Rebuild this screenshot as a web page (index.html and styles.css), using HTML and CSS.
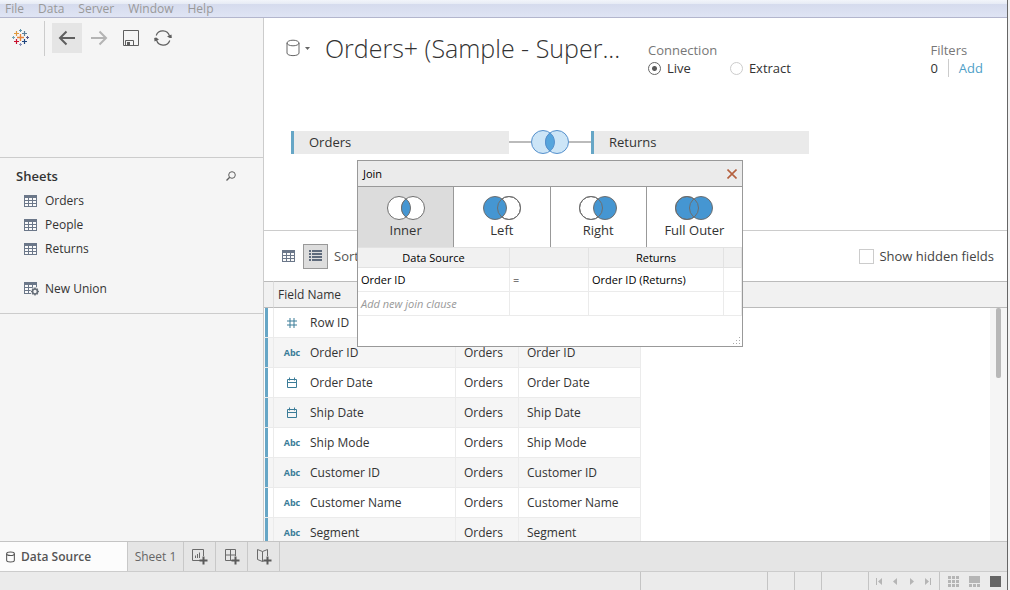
FILE: index.html
```html
<!DOCTYPE html>
<html lang="en">
<head>
  <meta charset="UTF-8" />
  <meta name="viewport" content="width=device-width, initial-scale=1.0"/>
  <title>Orders+ (Sample - Superstore)</title>
  <link rel="stylesheet" href="styles.css">
</head>
<body>

<!-- Shared icons -->
<svg width="0" height="0" class="sprite">
  <symbol id="i-table" viewBox="0 0 13 12">
    <path d="M0 0h13v12H0z" fill="#6b7789"/>
    <path d="M1 3h3v2H1zM5 3h3v2H5zM9 3h3v2H9zM1 6h3v2H1zM5 6h3v2H5zM9 6h3v2H9zM1 9h3v2H1zM5 9h3v2H5zM9 9h3v2H9z" fill="#fafafa"/>
  </symbol>
  <symbol id="i-date" viewBox="0 0 12 12">
    <path d="M1.500 2.500h9v8h-9zM1.500 5.500h9M3.500 .5v3M8.500 .5v3" fill="none" stroke="#3a7c98"/>
  </symbol>
  <symbol id="i-db" viewBox="0 0 14 18">
    <path d="M1 4v10c0 3.500 12 3.500 12 0V4" fill="none" stroke="#666"/>
    <ellipse cx="7" cy="4" rx="6" ry="2.800" fill="none" stroke="#666"/>
  </symbol>
</svg>

<div class="app">

  <nav class="menubar">
    <button>File</button>
    <button>Data</button>
    <button>Server</button>
    <button>Window</button>
    <button>Help</button>
  </nav>

  <div class="workspace">

    <!-- Left side -->
    <aside class="sidebar">
      <div class="toolbar">
        <svg class="logo" width="18" height="18" viewBox="0 0 18 18" fill="none">
          <path d="M5 8.500h7M8.500 5v7" stroke="#e8833a" stroke-width="1.300"/>
          <path d="M2 4.500h5M4.500 2v5" stroke="#e09a3e" stroke-width="1.200"/>
          <path d="M10 4.500h5M12.500 2v5" stroke="#5b7d99" stroke-width="1.200"/>
          <path d="M2 12.500h5M4.500 10v5" stroke="#c8102e" stroke-width="1.200"/>
          <path d="M10 12.500h5M12.500 10v5" stroke="#1f447e" stroke-width="1.200"/>
          <path d="M7 1.500h3M8.500 0v3" stroke="#5f94ad"/>
          <path d="M7 15.500h3M8.500 14v3" stroke="#8b96bb"/>
          <path d="M0 8.500h3M1.500 7v3" stroke="#74a3b3"/>
          <path d="M14 8.500h3M15.500 7v3" stroke="#5a5a8c"/>
        </svg>
        <span class="divider"></span>
        <button class="tool active" aria-label="Back">
          <svg width="18" height="16" viewBox="0 0 18 16"><path d="M8.500 1.500L2 8l6.500 6.500M2 8h15" fill="none" stroke="#5f5f5f" stroke-width="2"/></svg>
        </button>
        <button class="tool" aria-label="Forward">
          <svg width="18" height="16" viewBox="0 0 18 16"><path d="M9.500 1.500L16 8l-6.500 6.500M16 8H1" fill="none" stroke="#b4b4b4" stroke-width="2"/></svg>
        </button>
        <button class="tool" aria-label="Save">
          <svg width="16" height="16" viewBox="0 0 16 16"><path d="M.5.5h15v15H.5zM2.500 15.500v-5h8v5" fill="none" stroke="#5f5f5f"/><path d="M4 12h3v3H4z" fill="#5f5f5f"/></svg>
        </button>
        <button class="tool" aria-label="Refresh">
          <svg width="18" height="16" viewBox="0 0 18 16"><path d="M2.200 5.500A7 7 0 0 1 15.500 6M15.800 10.500A7 7 0 0 1 2.500 10" fill="none" stroke="#5f5f5f" stroke-width="1.200"/><path d="M13 6.500l4.500-2 .3 3.500-2 0zM5 9.500l-4.500 2-.3-3.500 2-.5z" fill="#5f5f5f"/></svg>
        </button>
      </div>

      <section class="sheets">
        <header>
          <h2>Sheets</h2>
          <button class="search" aria-label="Search sheets">
            <svg width="10" height="10" viewBox="0 0 10 10" fill="none" stroke="#5f5f5f"><circle cx="6" cy="4" r="3.300"/><path d="M3.700 6.300L.5 9.500" stroke-width="1.300"/></svg>
          </button>
        </header>
        <ul>
          <li><svg width="13" height="12"><use href="#i-table"/></svg>Orders</li>
          <li><svg width="13" height="12"><use href="#i-table"/></svg>People</li>
          <li><svg width="13" height="12"><use href="#i-table"/></svg>Returns</li>
          <li class="union">
            <svg width="15" height="14" viewBox="0 0 15 14">
              <path d="M0 0h13v6H9v6H0z" fill="#6b7789"/>
              <path d="M1 3h3v2H1zM5 3h3v2H5zM9 3h3v2H9zM1 6h3v2H1zM5 6h3v2H5zM1 9h3v2H1zM5 9h2v2H5z" fill="#fafafa"/>
              <circle cx="11" cy="9.500" r="4.500" fill="#f5f5f5"/>
              <circle cx="11" cy="9.500" r="2.400" fill="none" stroke="#666e78" stroke-width="1.500"/>
              <path d="M11 5.500v1.500M11 12v1.500M7 9.500h1.500M13.500 9.500H15M8.200 6.700l1 1M12.800 11.300l1 1M13.800 6.700l-1 1M9.200 11.300l-1 1" stroke="#666e78" stroke-width="1.400"/>
            </svg>New Union
          </li>
        </ul>
      </section>
    </aside>

    <!-- Data source page -->
    <main class="main">
      <div class="canvas">
        <div class="source-head">
          <button class="source-menu" aria-label="Data source options">
            <svg width="14" height="18"><use href="#i-db"/></svg>
            <svg width="5" height="3" viewBox="0 0 5 3"><path d="M0 0h5L2.500 3z" fill="#666"/></svg>
          </button>
          <h1>Orders+ (Sample - Super...</h1>
          <div class="connection">
            <span class="caption">Connection</span>
            <div class="choices">
              <label><input type="radio" name="connection" checked>Live</label>
              <label><input type="radio" name="connection">Extract</label>
            </div>
          </div>
          <div class="filters">
            <span class="caption">Filters</span>
            <div class="filter-row"><span class="count">0</span><a href="#">Add</a></div>
          </div>
        </div>

        <div class="joins">
          <div class="node">Orders</div>
          <span class="wire"></span>
          <svg width="38" height="24" viewBox="0 0 38 24">
            <g fill="#cce5f7" stroke="#5590cc"><circle cx="12" cy="12" r="11.500"/><circle cx="26" cy="12" r="11.500"/></g>
            <path d="M19 2.900a11.500 11.500 0 0 1 0 18.200a11.500 11.500 0 0 1 0-18.200z" fill="#55a5dd" stroke="#5590cc"/>
          </svg>
          <span class="wire"></span>
          <div class="node">Returns</div>
        </div>
      </div>

      <div class="grid-tools">
        <button class="view" aria-label="Preview data"><svg width="13" height="12"><use href="#i-table"/></svg></button>
        <button class="view selected" aria-label="Manage metadata">
          <svg width="13" height="12" viewBox="0 0 13 12" fill="#5f6b7c"><path d="M0 0h2v2H0zM3 0h10v2H3zM0 3h2v2H0zM3 3h10v2H3zM0 6h2v2H0zM3 6h10v2H3zM0 9h2v2H0zM3 9h10v2H3z"/></svg>
        </button>
        <span class="sort">Sort</span>
        <label class="hidden-fields"><input type="checkbox">Show hidden fields</label>
      </div>

      <div class="grid">
        <table class="fields">
          <colgroup><col class="c-mark"><col class="c-name"><col class="c-table"><col class="c-remote"><col></colgroup>
          <thead>
            <tr><th></th><th colspan="4">Field Name</th></tr>
          </thead>
          <tbody>
            <tr><td></td><td><span class="type"><svg width="12" height="12" viewBox="0 0 12 12"><path d="M4 1v10M8 1v10M1 4h10M1 8h10" fill="none" stroke="#3a7c98"/></svg></span>Row ID</td><td>Orders</td><td>Row ID</td><td></td></tr>
            <tr><td></td><td><span class="type">Abc</span>Order ID</td><td>Orders</td><td>Order ID</td><td></td></tr>
            <tr><td></td><td><span class="type"><svg width="12" height="12"><use href="#i-date"/></svg></span>Order Date</td><td>Orders</td><td>Order Date</td><td></td></tr>
            <tr><td></td><td><span class="type"><svg width="12" height="12"><use href="#i-date"/></svg></span>Ship Date</td><td>Orders</td><td>Ship Date</td><td></td></tr>
            <tr><td></td><td><span class="type">Abc</span>Ship Mode</td><td>Orders</td><td>Ship Mode</td><td></td></tr>
            <tr><td></td><td><span class="type">Abc</span>Customer ID</td><td>Orders</td><td>Customer ID</td><td></td></tr>
            <tr><td></td><td><span class="type">Abc</span>Customer Name</td><td>Orders</td><td>Customer Name</td><td></td></tr>
            <tr><td></td><td><span class="type">Abc</span>Segment</td><td>Orders</td><td>Segment</td><td></td></tr>
          </tbody>
        </table>
        <div class="scrollbar"><div class="thumb"></div></div>
      </div>

      <!-- Join dialog -->
      <div class="dialog" role="dialog" aria-label="Join">
        <div class="dialog-title">
          <span>Join</span>
          <button aria-label="Close"><svg width="10" height="10" viewBox="0 0 10 10"><path d="M.5.5l9 9M9.500.5l-9 9" stroke="#b5613f" stroke-width="1.600"/></svg></button>
        </div>
        <div class="join-types">
          <button class="selected">
            <svg width="38" height="24" viewBox="0 0 38 24" stroke="#6e6e6e"><g fill="#fff"><circle cx="12" cy="12" r="11.500"/><circle cx="26" cy="12" r="11.500"/></g><path d="M19 2.900a11.500 11.500 0 0 1 0 18.200a11.500 11.500 0 0 1 0-18.200z" fill="#4596d2"/></svg>
            Inner
          </button>
          <button>
            <svg width="38" height="24" viewBox="0 0 38 24" stroke="#6e6e6e"><circle cx="26" cy="12" r="11.500" fill="#fff"/><circle cx="12" cy="12" r="11.500" fill="#4596d2"/><circle cx="26" cy="12" r="11.500" fill="none"/></svg>
            Left
          </button>
          <button>
            <svg width="38" height="24" viewBox="0 0 38 24" stroke="#6e6e6e"><circle cx="12" cy="12" r="11.500" fill="#fff"/><circle cx="26" cy="12" r="11.500" fill="#4596d2"/><circle cx="12" cy="12" r="11.500" fill="none"/></svg>
            Right
          </button>
          <button>
            <svg width="38" height="24" viewBox="0 0 38 24" stroke="#6e6e6e"><circle cx="12" cy="12" r="11.500" fill="#4596d2"/><circle cx="26" cy="12" r="11.500" fill="#4596d2"/><circle cx="12" cy="12" r="11.500" fill="none"/></svg>
            Full Outer
          </button>
        </div>
        <table class="clauses">
          <colgroup><col class="k-left"><col class="k-op"><col class="k-right"><col></colgroup>
          <thead><tr><th>Data Source</th><th></th><th>Returns</th><th></th></tr></thead>
          <tbody>
            <tr><td>Order ID</td><td>=</td><td>Order ID (Returns)</td><td></td></tr>
            <tr><td class="hint">Add new join clause</td><td></td><td></td><td></td></tr>
          </tbody>
        </table>
        <svg class="grip" width="8" height="8" viewBox="0 0 8 8" fill="#aaa"><path d="M6 0h1v1H6zM6 3h1v1H6zM3 3h1v1H3zM0 6h1v1H0zM3 6h1v1H3zM6 6h1v1H6z"/></svg>
      </div>
    </main>
  </div>

  <!-- Sheet tabs -->
  <div class="tabs">
    <button class="tab current"><svg width="9" height="12" viewBox="0 0 14 18"><path d="M1 4v10c0 3.500 12 3.500 12 0V4" fill="none" stroke="#555" stroke-width="1.600"/><ellipse cx="7" cy="4" rx="6" ry="2.800" fill="none" stroke="#555" stroke-width="1.600"/></svg>Data Source</button>
    <button class="tab sheet">Sheet 1</button>
    <button class="tab add" aria-label="New worksheet">
      <svg width="16" height="16" viewBox="0 0 16 16" fill="none" stroke="#6a6a6a"><path d="M8 11.500H.5V.5h11V7M3.500 9V6.500M5.500 9V5M7.500 9V3.500"/><path d="M11.500 7.500v8M7.500 11.500h8" stroke="#5a5a5a" stroke-width="2"/></svg>
    </button>
    <button class="tab add" aria-label="New dashboard">
      <svg width="16" height="16" viewBox="0 0 16 16" fill="none" stroke="#6a6a6a"><path d="M8 11.500H1.500V.5h10V7M1.500 6h10M6.500 .5v11"/><path d="M11.500 7.500v8M7.500 11.500h8" stroke="#5a5a5a" stroke-width="2"/></svg>
    </button>
    <button class="tab add" aria-label="New story">
      <svg width="16" height="16" viewBox="0 0 16 16" fill="none" stroke="#6a6a6a"><path d="M6.500 2.500L1.500 .5v10l5 2zM6.500 2.500l5-2V7M6.500 12.500L8 11.800"/><path d="M11.500 7.500v8M7.500 11.500h8" stroke="#5a5a5a" stroke-width="2"/></svg>
    </button>
  </div>

  <footer class="status">
    <span class="cell wide"></span>
    <span class="cell"></span>
    <span class="cell"></span>
    <span class="cell mid"></span>
    <span class="cell pager">
      <button aria-label="First"><svg width="7" height="7" viewBox="0 0 7 7"><path d="M0 0h1v7H0zM6 0v7L2 3.500z"/></svg></button>
      <button aria-label="Previous"><svg width="7" height="7" viewBox="0 0 7 7"><path d="M5 0v7L1 3.500z"/></svg></button>
      <button aria-label="Next"><svg width="7" height="7" viewBox="0 0 7 7"><path d="M2 0v7l4-3.500z"/></svg></button>
      <button aria-label="Last"><svg width="7" height="7" viewBox="0 0 7 7"><path d="M6 0h1v7H6zM1 0v7l4-3.500z"/></svg></button>
    </span>
    <span class="cell views">
      <button aria-label="Sheet sorter"><svg width="11" height="11" viewBox="0 0 11 11"><path d="M0 0h3v3H0zM4 0h3v3H4zM8 0h3v3H8zM0 4h3v3H0zM4 4h3v3H4zM8 4h3v3H8zM0 8h3v3H0zM4 8h3v3H4zM8 8h3v3H8z"/></svg></button>
      <button aria-label="Filmstrip"><svg width="11" height="11" viewBox="0 0 11 11"><path d="M0 0h11v7H0zM0 8h3v3H0zM4 8h3v3H4zM8 8h3v3H8z"/></svg></button>
      <button class="on" aria-label="Tabs"><svg width="11" height="11" viewBox="0 0 11 11"><path d="M0 0h11v11H0z"/></svg></button>
    </span>
  </footer>

</div>

</body>
</html>
```
FILE: styles.css
```css
* {
  box-sizing: border-box;
}

body {
  margin: 0;
  padding-right: 2px;
  background: #f2f2f2;
  color: #333;
  font-family: "Open Sans", "Noto Sans", sans-serif;
  font-size: 13px;
  line-height: 18px;
}

button {
  display: flex;
  align-items: center;
  justify-content: center;
  margin: 0;
  padding: 0;
  border: 0;
  background: none;
  color: inherit;
  font: inherit;
}

svg {
  display: block;
  flex: none;
}

h1, h2, ul {
  margin: 0;
  padding: 0;
  list-style: none;
}

.sprite {
  position: absolute;
}

.app {
  display: flex;
  flex-direction: column;
  height: 100vh;
  border-right: 1px solid #666;
  background: #fff;
}

/* Menu bar */
.menubar {
  display: flex;
  gap: 14px;
  height: 18px;
  padding: 0 5px;
  border-bottom: 1px solid #b3b6cd;
  background: linear-gradient(#f2f5fa 0, #e6ebf5 4px, #d5dbed 4px, #dfe4f4 17px);
  color: #999;
  font-size: 12px;
}

.workspace {
  display: flex;
  flex: 1;
  min-height: 0;
}

/* Sidebar */
.sidebar {
  width: 264px;
  flex: none;
  border-right: 1px solid #ccc;
  background: #f5f5f5;
}

.toolbar {
  display: flex;
  align-items: flex-start;
  height: 140px;
  padding: 3px 12px 0;
  border-bottom: 1px solid #ccc;
}

.logo {
  margin: 8px 14px 0 0;
}

.divider {
  width: 1px;
  height: 35px;
  margin-right: 7px;
  background: #ccc;
}

.tool {
  width: 30px;
  height: 30px;
  margin: 2px 2px 0 0;
}

.tool.active {
  background: #e5e5e5;
}

.sheets {
  padding: 8px 16px 12px;
  border-bottom: 1px solid #ccc;
}

.sheets header {
  display: flex;
  align-items: center;
  justify-content: space-between;
  height: 20px;
  padding-right: 11px;
  margin-bottom: 3px;
}

.sheets h2 {
  font-size: 13px;
  font-weight: 600;
}

.sheets li {
  display: flex;
  align-items: center;
  gap: 8px;
  height: 24px;
  padding-left: 8px;
  font-size: 12px;
}

.sheets .union {
  gap: 6px;
  margin-top: 16px;
}

/* Data source */
.main {
  position: relative;
  display: flex;
  flex: 1;
  flex-direction: column;
  min-width: 0;
}

.canvas {
  height: 213px;
  flex: none;
  border-bottom: 1px solid #ccc;
}

.source-head {
  display: flex;
  padding: 10px 24px 0 22px;
  height: 112px;
}

.source-menu {
  gap: 5px;
  width: 39px;
  height: 40px;
  justify-content: flex-start;
}

.source-head h1 {
  width: 323px;
  font-size: 25px;
  font-weight: 300;
  line-height: 40px;
  white-space: nowrap;
}

.connection, .filters {
  padding-top: 13px;
  line-height: 18px;
}

.caption {
  display: block;
  color: #777;
}

.choices {
  display: flex;
  gap: 39px;
}

.choices label {
  display: flex;
  align-items: center;
  gap: 6px;
}

input {
  margin: 0;
  appearance: none;
  background: #fff;
}

input[type="radio"] {
  width: 13px;
  height: 13px;
  border: 1px solid #ccc;
  border-radius: 50%;
}

input[type="radio"]:checked {
  border-color: #666;
  background: radial-gradient(circle, #5a5a5a 2px, #fff 3px);
}

.filters {
  margin-left: auto;
}

.filter-row {
  display: flex;
}

.count {
  padding-right: 10px;
  margin-right: 10px;
  border-right: 1px solid #ccc;
}

a {
  color: #4f9fc8;
  text-decoration: none;
}

.joins {
  display: flex;
  align-items: center;
  padding-left: 27px;
}

.node {
  width: 218px;
  height: 23px;
  padding-left: 15px;
  border-left: 3px solid #66a6c6;
  background: #eaeaea;
  line-height: 23px;
}

.wire {
  width: 22px;
  height: 2px;
  background: #bbb;
}

.grid-tools {
  display: flex;
  align-items: center;
  height: 50px;
  flex: none;
  padding: 0 13px 0 12px;
}

.view {
  width: 25px;
  height: 25px;
  margin-right: 2px;
}

.view.selected {
  border: 1px solid #999;
  background: #ddd;
}

.sort {
  margin-left: 4px;
  color: #555;
}

.hidden-fields {
  display: flex;
  align-items: center;
  gap: 5px;
  margin-left: auto;
  color: #444;
}

.hidden-fields input {
  width: 15px;
  height: 15px;
  border: 1px solid #ccc;
}

/* Field list */
.grid {
  position: relative;
  flex: 1;
  min-height: 0;
  overflow: hidden;
}

table {
  width: 100%;
  border-spacing: 0;
  table-layout: fixed;
}

th, td {
  padding: 0;
  text-align: left;
  font-weight: 400;
}

.c-mark { width: 10px; }
.c-name { width: 182px; }
.c-table { width: 63px; }
.c-remote { width: 122px; }

.fields {
  font-size: 12px;
}

.fields th {
  height: 27px;
  padding-left: 4px;
  border-top: 1px solid #bbb;
  border-bottom: 1px solid #bbb;
  background: #f1f1f1;
}

.fields th:first-child {
  border-right: 1px solid #ddd;
}

.fields td {
  height: 30px;
  padding-left: 8px;
  border-right: 1px solid #ebebeb;
  border-bottom: 1px solid #ebebeb;
}

.fields td:first-child {
  background: linear-gradient(to right, transparent 1px, #66a6c6 1px, #66a6c6 4px, transparent 4px);
}

.fields tbody tr:nth-child(even) td {
  background-color: #f5f5f5;
}

.fields tbody tr td:last-child {
  border: 0;
  background-color: #fff;
}

.type {
  display: inline-flex;
  align-items: center;
  justify-content: center;
  width: 20px;
  height: 18px;
  margin-right: 8px;
  color: #3a7c98;
  font-size: 9px;
  font-weight: 700;
  vertical-align: top;
}

.scrollbar {
  position: absolute;
  top: 27px;
  right: 0;
  bottom: 0;
  width: 17px;
  padding-left: 6px;
  background: #f5f5f5;
}

.thumb {
  width: 5px;
  height: 70px;
  border-radius: 2px;
  background: #b8b8b8;
}

/* Join dialog */
.dialog {
  position: absolute;
  top: 142px;
  left: 93px;
  width: 386px;
  height: 187px;
  border: 1px solid #999;
  background: #fff;
  color: #000;
  font-size: 11px;
}

.dialog-title {
  display: flex;
  align-items: center;
  justify-content: space-between;
  height: 26px;
  padding: 0 5px;
  border-bottom: 1px solid #999;
  background: #ebebeb;
}

.join-types {
  display: flex;
}

.join-types button {
  flex: 1;
  flex-direction: column;
  height: 60px;
  padding-top: 2px;
  border-right: 1px solid #999;
  color: #333;
  font-size: 13px;
  line-height: 20px;
}

.join-types button:last-child {
  border-right: 0;
}

.join-types .selected {
  background: #dcdcdc;
}

.k-left { width: 152px; }
.k-op { width: 79px; }
.k-right { width: 135px; }

.clauses th {
  height: 21px;
  border: solid #e2e2e2;
  border-width: 1px 1px 1px 0;
  background: #f1f1f1;
  text-align: center;
}

.clauses td {
  height: 24px;
  padding-left: 3px;
  border-right: 1px solid #ebebeb;
  border-bottom: 1px solid #ebebeb;
}

.clauses .hint {
  color: #999;
  font-style: italic;
}

.grip {
  position: absolute;
  right: 1px;
  bottom: 1px;
}

/* Bottom bars */
.tabs {
  display: flex;
  height: 30px;
  flex: none;
  border-top: 1px solid #c4c4c4;
  background: #e5e5e5;
}

.tab {
  border-right: 1px solid #c8c8c8;
  color: #666;
}

.tab.current {
  width: 128px;
  justify-content: flex-start;
  gap: 6px;
  padding-left: 6px;
  background: #fcfcfc;
  color: #555;
  font-size: 12px;
  font-weight: 600;
}

.tab.sheet {
  width: 56px;
  font-size: 12px;
}

.tab.add {
  width: 32px;
  padding-top: 1px;
}

.status {
  display: flex;
  justify-content: flex-end;
  height: 19px;
  flex: none;
  border-top: 1px solid #ccc;
  background: #ebebeb;
}

.cell {
  display: flex;
  align-items: center;
  width: 27px;
  border-left: 1px solid #c4c4c4;
}

.cell.wide { width: 127px; }
.cell.mid { width: 47px; }

.cell button svg {
  fill: #b5b5b5;
}

.pager {
  width: 71px;
  padding-left: 2px;
}

.pager button {
  width: 16px;
}

.views {
  width: 68px;
  gap: 10px;
  padding-left: 8px;
}

.views .on svg {
  fill: #666;
}
```
